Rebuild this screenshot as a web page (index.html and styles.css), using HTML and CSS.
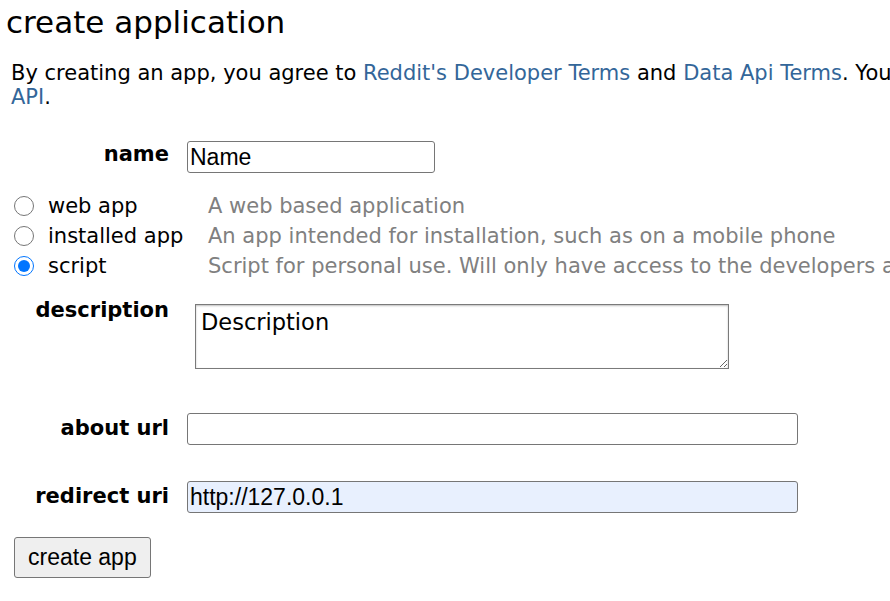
FILE: index.html
```html
<!DOCTYPE html>
<html>
<head>
<meta charset="utf-8">
<link rel="stylesheet" href="styles.css">
</head>
<body>
<div class="page">
  <h1 class="title">create application</h1>
  <p class="terms"><span class="line">By creating an app, you agree to <a href="#">Reddit's Developer Terms</a> and <a href="#">Data Api Terms</a>. You must register to use the</span><br><a href="#">API</a>.</p>
  <form class="form">
    <div class="field field-name">
      <label class="label">name</label>
      <input class="text short" type="text" value="Name">
    </div>
    <div class="types">
      <div class="type">
        <input class="radio" type="radio" name="kind">
        <span class="type-name">web app</span>
        <span class="type-desc">A web based application</span>
      </div>
      <div class="type">
        <input class="radio" type="radio" name="kind">
        <span class="type-name">installed app</span>
        <span class="type-desc">An app intended for installation, such as on a mobile phone</span>
      </div>
      <div class="type">
        <input class="radio" type="radio" name="kind" checked>
        <span class="type-name">script</span>
        <span class="type-desc">Script for personal use. Will only have access to the developers accounts</span>
      </div>
    </div>
    <div class="field field-desc">
      <label class="label">description</label>
      <textarea class="area">Description</textarea>
    </div>
    <div class="field field-about">
      <label class="label">about url</label>
      <input class="text long" type="text">
    </div>
    <div class="field field-redirect">
      <label class="label">redirect uri</label>
      <input class="text long filled" type="text" value="http://127.0.0.1">
    </div>
    <button class="btn" type="button">create app</button>
  </form>
</div>
</body>
</html>
```
FILE: styles.css
```css
html, body {
  margin: 0;
  padding: 0;
  background: #fff;
  overflow: hidden;
}
.page {
  width: 890px;
  height: 601px;
  overflow: hidden;
  font-family: "DejaVu Sans", Verdana, sans-serif;
  color: #000;
}
.title {
  margin: 0;
  padding: 4px 0 0 6px;
  font-size: 31px;
  font-weight: normal;
  line-height: 36px;
  white-space: nowrap;
}
.terms {
  margin: 21px 0 0 11px;
  width: 1300px;
  font-size: 21px;
  line-height: 24px;
}
.terms .line {
  white-space: nowrap;
}
.terms a {
  color: #336699;
  text-decoration: none;
}
.form {
  margin: 0;
}
.field {
  display: grid;
  grid-template-columns: 169px auto;
  column-gap: 18px;
  align-items: start;
}
.label {
  text-align: right;
  font-weight: bold;
  font-size: 21px;
  line-height: 24px;
  white-space: nowrap;
}
.field-name {
  margin-top: 32px;
}
.field-name .label {
  padding-top: 1px;
}
.text {
  box-sizing: border-box;
  height: 32px;
  margin: 0;
  border: 1px solid #767676;
  border-radius: 3px;
  padding: 0 2px;
  font-family: "Liberation Sans", Arial, sans-serif;
  font-size: 23px;
  color: #000;
  background: #fff;
  outline: none;
}
.short { width: 248px; }
.long { width: 611px; }
.filled { background: #e8f0fe; }
.types {
  margin-top: 18px;
  display: flex;
  flex-direction: column;
}
.type {
  display: flex;
  align-items: center;
  height: 30px;
  font-size: 21px;
  white-space: nowrap;
}
.radio {
  margin: 0 14px 0 14px;
  width: 20px;
  height: 20px;
  flex: none;
}
.type-name {
  width: 160px;
  flex: none;
}
.type-desc {
  color: #808080;
}
.field-desc {
  margin-top: 17px;
}
.area {
  box-sizing: border-box;
  margin: 6px 0 0 8px;
  width: 534px;
  height: 65px;
  border: 1px solid #7a7a7a;
  box-shadow: inset 0 1px 2px rgba(0,0,0,0.25);
  padding: 4px 5px;
  font-family: "DejaVu Sans", Verdana, sans-serif;
  font-size: 22.5px;
  line-height: 26px;
  resize: vertical;
  outline: none;
}
.field-about {
  margin-top: 44px;
}
.field-about .label { padding-top: 3px; }
.field-redirect {
  margin-top: 36px;
}
.field-redirect .label { padding-top: 3px; }
.btn {
  margin: 24px 0 0 14px;
  box-sizing: border-box;
  height: 41px;
  padding: 0 13px;
  border: 1px solid #767676;
  border-radius: 3px;
  background: #efefef;
  font-family: "Liberation Sans", Arial, sans-serif;
  font-size: 23px;
  color: #000;
}
```
